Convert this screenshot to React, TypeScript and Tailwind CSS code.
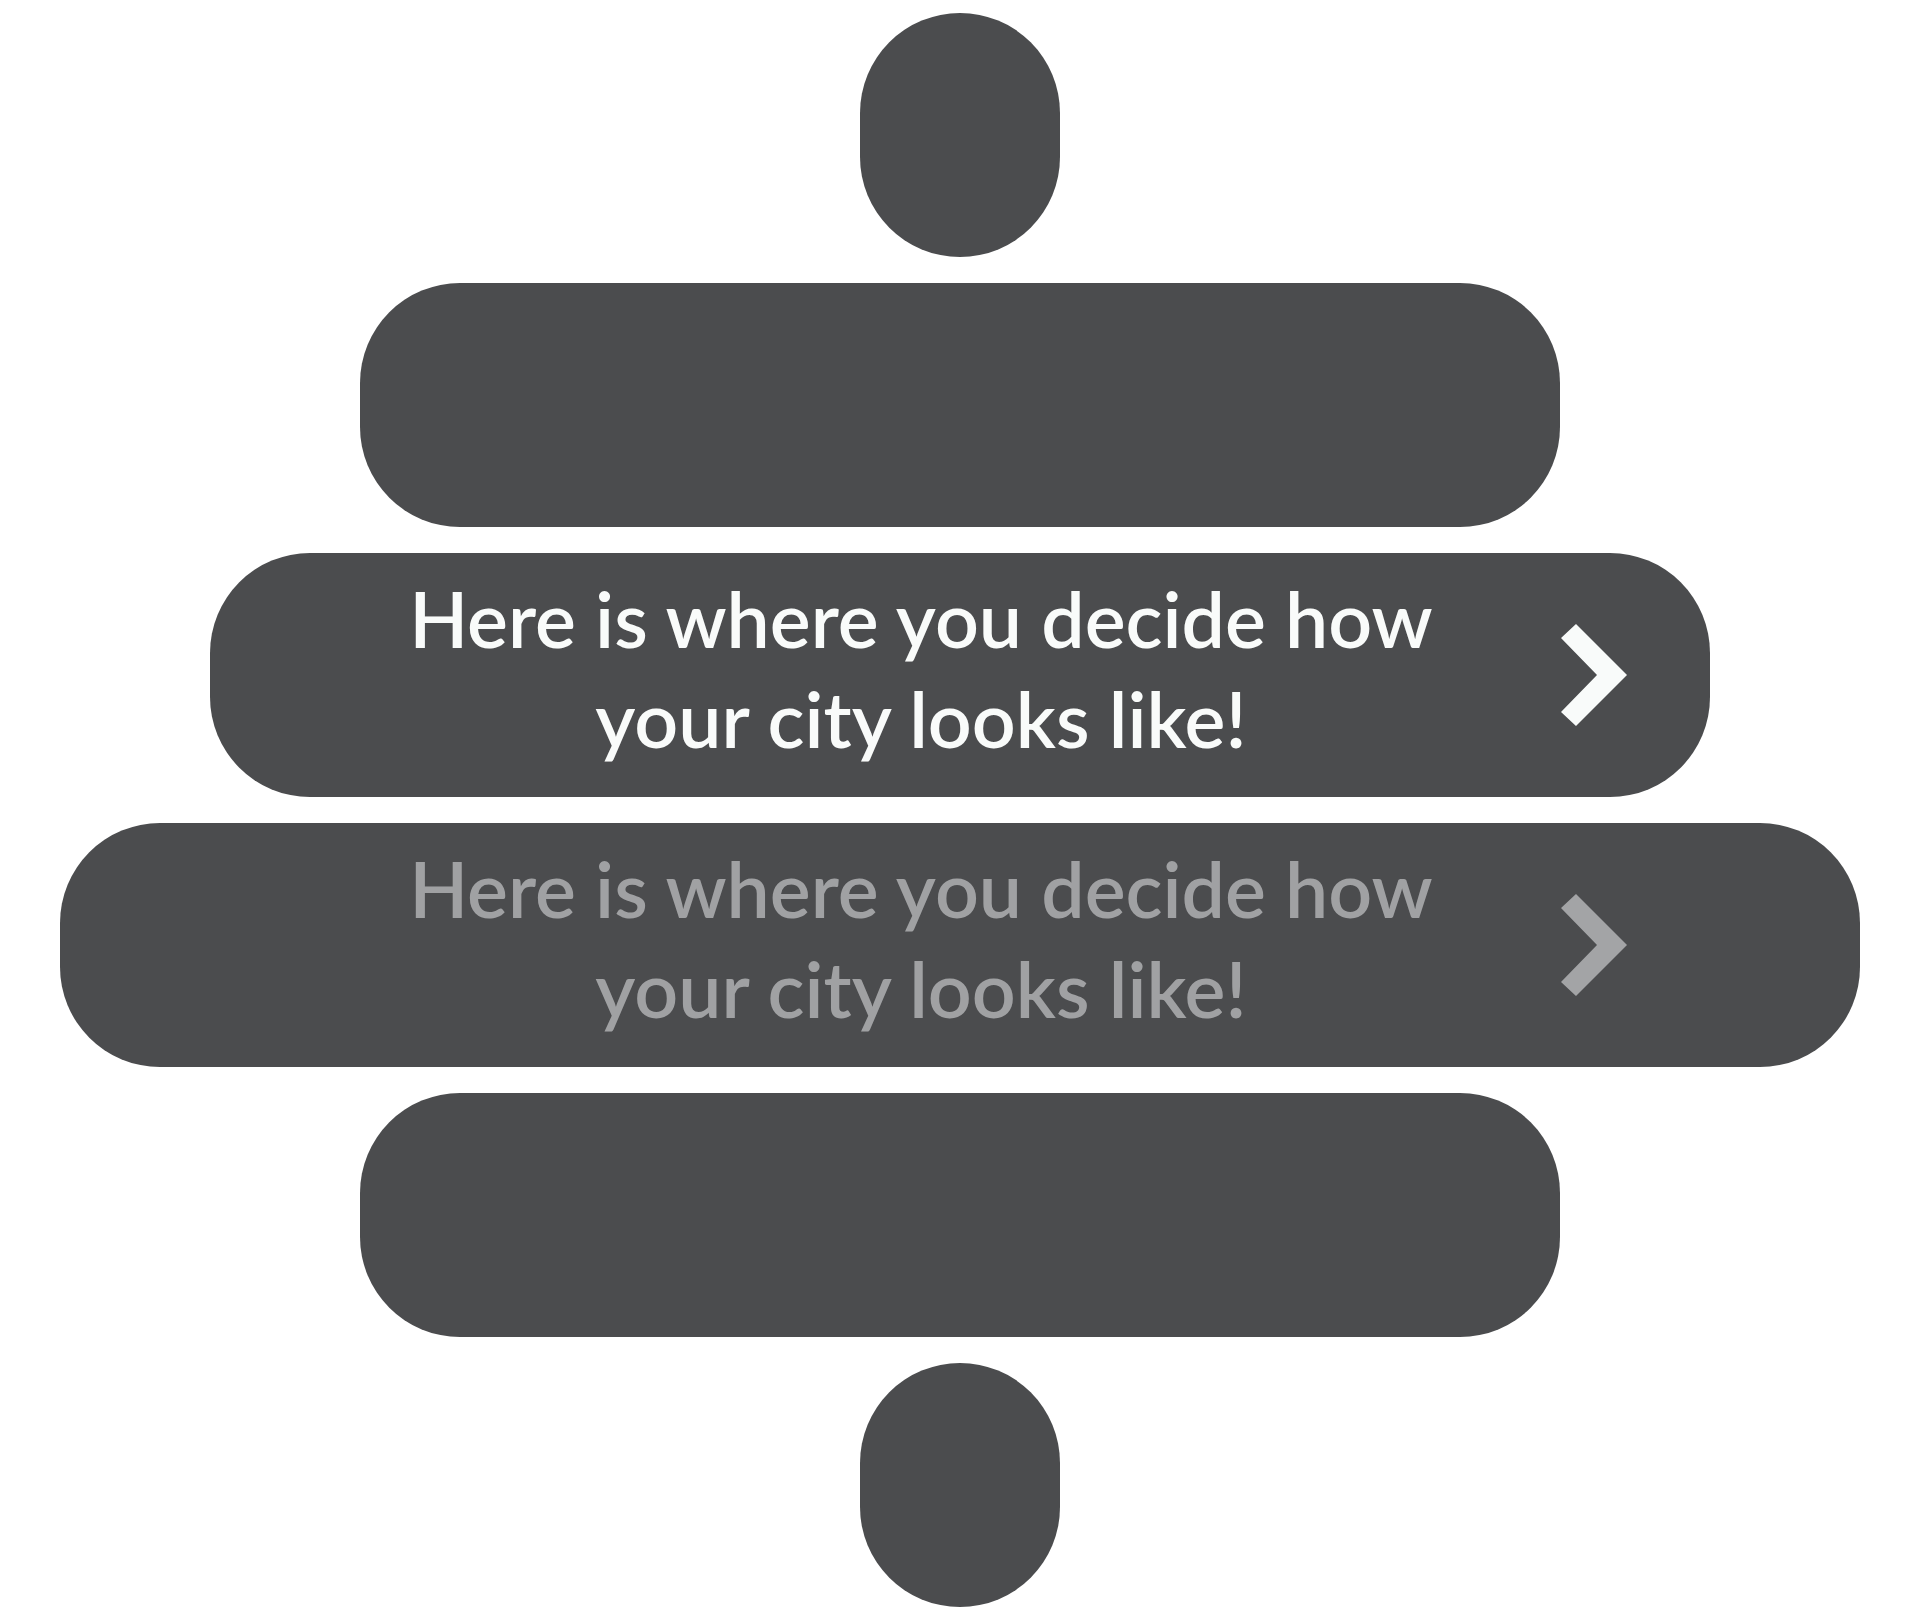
import React from 'react';

const Chevron: React.FC<{ color: string }> = ({ color }) => (
  <svg width="66" height="102" viewBox="0 0 66 102" className="shrink-0">
    <polygon points="0,14 15,0 66,51 15,102 0,88 36,51" fill={color} />
  </svg>
);

const Bar: React.FC<{ width: string; children?: React.ReactNode }> = ({ width, children }) => (
  <div className={`${width} h-[244px] rounded-[100px] bg-[#4b4c4e] flex items-center justify-center`}>
    {children}
  </div>
);

const Message: React.FC<{ muted?: boolean }> = ({ muted = false }) => (
  <div className="w-[1500px] flex items-center pl-[100px]">
    <p
      className={`w-[1222px] pb-[14px] text-center text-[77px] leading-[100px] font-semibold ${
        muted ? 'text-[#a0a1a3]' : 'text-[#f9fbfa]'
      }`}
      style={{ fontFamily: 'Lato, "Open Sans", sans-serif' }}
    >
      Here is where you decide how
      <br />
      your city looks like!
    </p>
    <div className="ml-[29px]">
      <Chevron color={muted ? '#a3a4a6' : '#f9fbfa'} />
    </div>
  </div>
);

export default function App() {
  return (
    <div className="w-[1920px] h-[1621px] bg-white flex flex-col items-center pt-[13px] gap-[26px]">
      <Bar width="w-[200px]" />
      <Bar width="w-[1200px]" />
      <Bar width="w-[1500px]">
        <Message />
      </Bar>
      <Bar width="w-[1800px]">
        <Message muted />
      </Bar>
      <Bar width="w-[1200px]" />
      <Bar width="w-[200px]" />
    </div>
  );
}
